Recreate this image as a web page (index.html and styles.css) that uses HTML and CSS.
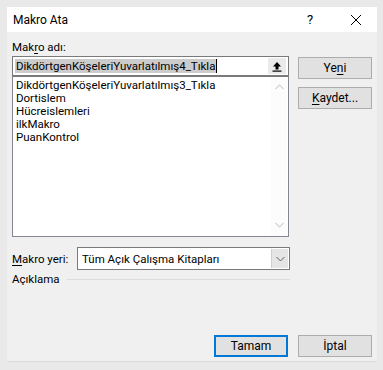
FILE: index.html
```html
<!DOCTYPE html>
<html lang="tr">
<head>
  <meta charset="UTF-8">
  <title>Makro Ata</title>
  <link rel="stylesheet" href="styles.css">
</head>
<body>
  <div class="window">
    <!-- Title bar -->
    <div class="titlebar">
      <span class="title">Makro Ata</span>
      <span class="help">?</span>
      <span class="close">
        <svg width="12" height="12" viewBox="0 0 12 12"><path d="M1 1L11 11M11 1L1 11" stroke="#000" stroke-width="1"/></svg>
      </span>
    </div>

    <div class="content">
      <div class="top">
        <div class="left">
          <div class="label">Mak<u>r</u>o adı:</div>
          <div class="namebox">
            <span class="selected">DikdörtgenKöşeleriYuvarlatılmış4_Tıkla</span><span class="caret"></span>
            <span class="upbtn">
              <svg width="10" height="11" viewBox="0 0 10 11"><path d="M5 1L1 5.5H3.5V8.5H6.5V5.5H9Z" fill="#000"/><rect x="0.5" y="9.5" width="9" height="1.2" fill="#000"/></svg>
            </span>
          </div>
          <div class="listbox">
            <ul class="items">
              <li>DikdörtgenKöşeleriYuvarlatılmış3_Tıkla</li>
              <li>Dortislem</li>
              <li>Hücreislemleri</li>
              <li>ilkMakro</li>
              <li>PuanKontrol</li>
            </ul>
            <div class="scrollbar">
              <svg width="9" height="6" viewBox="0 0 9 6"><path d="M0.5 5L4.5 1L8.5 5" fill="none" stroke="#d4d4d4" stroke-width="1.2"/></svg>
              <svg width="9" height="6" viewBox="0 0 9 6"><path d="M0.5 1L4.5 5L8.5 1" fill="none" stroke="#d4d4d4" stroke-width="1.2"/></svg>
            </div>
          </div>
        </div>
        <div class="right">
          <button class="btn">Ye<u>n</u>i</button>
          <button class="btn"><u>K</u>aydet...</button>
        </div>
      </div>

      <div class="place-row">
        <span class="label"><u>M</u>akro yeri:</span>
        <div class="select">
          <span class="select-text">Tüm Açık Çalışma Kitapları</span>
          <span class="drop">
            <svg width="9" height="6" viewBox="0 0 9 6"><path d="M0.5 1L4.5 5L8.5 1" fill="none" stroke="#606060" stroke-width="1"/></svg>
          </span>
        </div>
      </div>

      <div class="desc-row">
        <span class="label">Açıklama</span>
        <span class="rule"></span>
      </div>

      <div class="footer">
        <button class="btn default">Tamam</button>
        <button class="btn">İptal</button>
      </div>
    </div>
  </div>
</body>
</html>
```

FILE: styles.css
```css
/* Global */
body {
  margin: 0;
  background: #e9e9e9;
  font-family: Roboto, 'Noto Sans', sans-serif;
  font-size: 11.5px;
  color: #000;
}
.window {
  width: 370px;
  height: 354px;
  margin: 7px 0 0 7px;
  background: #f0f0f0;
  border-bottom: 1px solid #dadada;
  display: flex;
  flex-direction: column;
}

/* Title bar */
.titlebar {
  height: 25px;
  background: #ffffff;
  display: flex;
  align-items: center;
  padding-left: 6px;
}
.title {
  flex: 1;
  font-size: 12px;
}
.help {
  width: 43px;
  font-size: 13px;
}
.close {
  width: 27px;
  display: flex;
  align-items: center;
  padding-top: 1px;
}

/* Content */
.content {
  flex: 1;
  display: flex;
  flex-direction: column;
  padding: 7px 5px 0 5px;
}
.top {
  display: flex;
  gap: 9px;
}
.left {
  width: 278px;
  display: flex;
  flex-direction: column;
}
.label {
  height: 17px;
  line-height: 16px;
}
u {
  text-decoration-thickness: 1px;
  text-underline-offset: 2px;
}

/* Name input */
.namebox {
  height: 18px;
  border: 1px solid #7a7a7a;
  background: #fff;
  display: flex;
  align-items: center;
  padding-left: 2px;
}
.selected {
  background: #cccccc;
  line-height: 14px;
  padding: 0 1px;
}
.caret {
  width: 1px;
  height: 14px;
  background: #000;
}
.upbtn {
  margin-left: auto;
  margin-right: 2px;
  width: 18px;
  height: 16px;
  background: #ebebeb;
  display: flex;
  align-items: center;
  justify-content: center;
}

/* List */
.listbox {
  height: 159px;
  border: 1px solid #828790;
  border-top-color: #7a7a7a;
  background: #fff;
  display: flex;
}
.items {
  flex: 1;
  list-style: none;
  margin: 0;
  padding: 2px 0 0 3px;
}
.items li {
  line-height: 13px;
  height: 13px;
}
.scrollbar {
  width: 16px;
  margin-right: 1px;
  background: #fcfcfc;
  display: flex;
  flex-direction: column;
  align-items: center;
  justify-content: space-between;
  padding: 7px 0 8px;
}

/* Buttons */
.right {
  display: flex;
  flex-direction: column;
  gap: 8px;
  padding-top: 18px;
}
.btn {
  width: 74px;
  height: 22px;
  background: #e1e1e1;
  border: 1px solid #adadad;
  font-family: inherit;
  font-size: 12px;
  color: #000;
  padding: 0;
}
.btn.default {
  border: 2px solid #0078d7;
}

/* Makro yeri */
.place-row {
  display: flex;
  align-items: center;
  margin-top: 10px;
}
.place-row .label {
  width: 65px;
  height: auto;
}
.select {
  width: 211px;
  height: 21px;
  border: 1px solid #7a7a7a;
  background: #fff;
  display: flex;
  align-items: center;
}
.select-text {
  flex: 1;
  padding-left: 4px;
}
.drop {
  width: 16px;
  height: 19px;
  margin-right: 1px;
  background: #e5e5e5;
  border-left: 1px solid #cfcfcf;
  display: flex;
  align-items: center;
  justify-content: center;
}

/* Description */
.desc-row {
  display: flex;
  align-items: center;
  width: 278px;
  margin-top: 1px;
  height: 17px;
}
.rule {
  flex: 1;
  height: 1px;
  background: #dcdcdc;
  margin-left: 7px;
}

/* Footer */
.footer {
  display: flex;
  justify-content: flex-end;
  gap: 10px;
  margin-top: 47px;
}
```
